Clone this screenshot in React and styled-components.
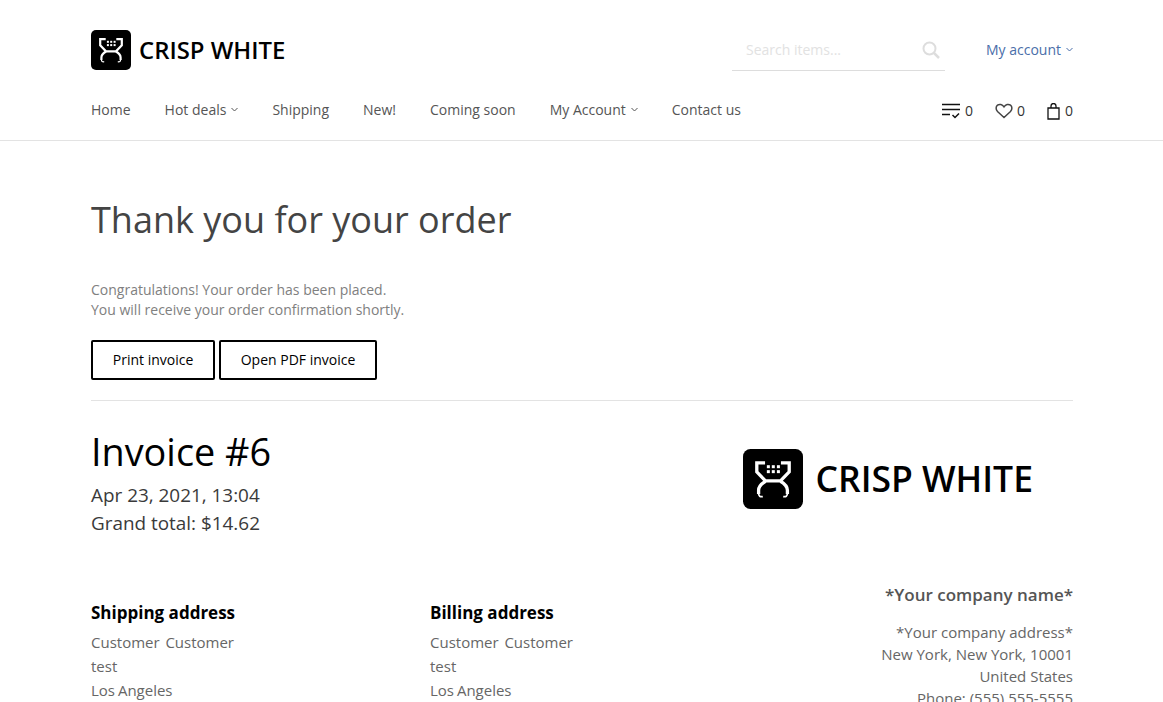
import React from "react";
import styled, { createGlobalStyle } from "styled-components";

const GlobalStyle = createGlobalStyle`
  html, body {
    margin: 0;
    padding: 0;
    background: #fff;
    overflow: hidden;
  }
  body {
    font-family: "Open Sans", "Liberation Sans", sans-serif;
    font-size: 14px;
    color: #444;
  }
  * { box-sizing: border-box; }
`;

const Page = styled.div`
  height: 100vh;
  overflow: hidden;
`;

const Header = styled.header`
  height: 141px;
  border-bottom: 1px solid #e3e3e3;
`;

const Wrap = styled.div`
  width: 982px;
  margin-left: 91px;
`;

const TopRow = styled.div`
  display: flex;
  align-items: center;
  justify-content: space-between;
  height: 71px;
  padding-top: 29px;
`;

const Brand = styled.div`
  display: flex;
  align-items: center;
  gap: ${(p) => (p.$big ? "12px" : "8px")};
  color: #000;
  font-size: ${(p) => (p.$big ? "35.5px" : "23.9px")};
  font-weight: 600;
  line-height: 1;
  white-space: nowrap;
`;

const BrandName = styled.span`
  padding-bottom: ${(p) => (p.$big ? "1px" : "0")};
`;

const TopRight = styled.div`
  display: flex;
  align-items: center;
`;

const Search = styled.div`
  width: 213px;
  height: 42px;
  margin-right: 41px;
  padding: 0 5px 0 14px;
  display: flex;
  align-items: center;
  justify-content: space-between;
  border-bottom: 1px solid #ddd;
  color: #e2e2e2;
  font-size: 14px;
`;

const Account = styled.a`
  display: flex;
  align-items: center;
  gap: 5px;
  padding-bottom: 2px;
  color: #4a6ea9;
  font-size: 14px;
`;

const NavRow = styled.div`
  display: flex;
  align-items: center;
  justify-content: space-between;
  height: 40px;
  margin-top: 18px;
`;

const Menu = styled.nav`
  display: flex;
  gap: 34px;
`;

const MenuItem = styled.a`
  display: flex;
  align-items: center;
  gap: 5px;
  color: #555;
  font-size: 14px;
  line-height: 19px;
`;

const Counters = styled.div`
  display: flex;
  gap: 22px;
  padding-top: 4px;
`;

const Counter = styled.div`
  display: flex;
  align-items: center;
  gap: ${(p) => p.$gap || "5px"};
  color: #333;
  font-size: 14px;
  line-height: 20px;
`;

const Title = styled.h1`
  margin: 52px 0 0;
  font-size: 36px;
  line-height: 54px;
  font-weight: 400;
  color: #444;
`;

const Lead = styled.p`
  margin: 33px 0 0;
  font-size: 14px;
  line-height: 20px;
  color: #808080;
`;

const Actions = styled.div`
  display: flex;
  gap: 4px;
  margin-top: 20px;
  padding-bottom: 20px;
  border-bottom: 1px solid #e3e3e3;
`;

const OutlineButton = styled.button`
  width: ${(p) => p.$w};
  height: 40px;
  padding: 0 0 2px;
  background: #fff;
  border: 2px solid #000;
  border-radius: 2px;
  color: #000;
  font-family: inherit;
  font-size: 14px;
`;

const InvoiceHead = styled.div`
  display: flex;
  justify-content: space-between;
`;

const InvoiceTitle = styled.h2`
  margin: 24px 0 0;
  font-size: 37.8px;
  line-height: 54px;
  font-weight: 400;
  color: #000;
`;

const InvoiceMeta = styled.div`
  margin-top: 2px;
  font-size: 18.9px;
  line-height: 28px;
  font-weight: 400;
  color: #3a3a3a;
`;

const LogoSlot = styled.div`
  margin: 48px 40px 0 0;
`;

const Columns = styled.div`
  display: flex;
  margin-top: 46px;
`;

const AddressColumn = styled.div`
  width: 339px;
  padding-top: 18px;
`;

const AddressTitle = styled.h3`
  margin: 0 0 5px;
  font-size: 17px;
  line-height: 24px;
  font-weight: 700;
  color: #000;
`;

const AddressLine = styled.div`
  font-size: 15px;
  line-height: 24px;
  word-spacing: -1px;
  color: #666;
  white-space: pre-wrap;
`;

const Company = styled.div`
  flex: 1;
  text-align: right;
  color: #666;
  font-size: 15px;
  line-height: 22px;
`;

const CompanyName = styled.div`
  margin-bottom: 14px;
  color: #555;
  font-size: 17px;
  line-height: 24px;
  font-weight: 600;
`;

function CartMark({ size }) {
  return (
    <svg width={size} height={size} viewBox="0 0 40 40">
      <rect width="40" height="40" rx="5" fill="#000" />
      <g fill="none" stroke="#fff" strokeWidth="2.200">
        <path d="M14.700 9.200H9.200V15.300L15 21.300H25L30.800 15.300V9.200H25.300" />
        <path d="M15 21.500C12.500 23 10.400 24.500 10.400 27.500V30" />
        <path d="M25 21.500C27.500 23 29.600 24.500 29.600 27.500V30" />
        <path d="M10.400 29.500c0 2 1 2.500 2.800 2.200M29.600 29.500c0 2-1 2.500-2.800 2.200" strokeWidth="1.200" />
      </g>
      <g fill="#fff">
        <rect x="15.900" y="10.800" width="2" height="2" />
        <rect x="19.200" y="10.800" width="2" height="2" />
        <rect x="22.600" y="10.800" width="2" height="2" />
        <rect x="15.900" y="14.100" width="2" height="2" />
        <rect x="19.200" y="14.100" width="2" height="2" />
        <rect x="22.600" y="14.100" width="2" height="2" />
      </g>
    </svg>
  );
}

function Chevron() {
  return (
    <svg width="7" height="5" viewBox="0 0 7 5" fill="none" stroke="currentColor" strokeWidth="1">
      <path d="M.5 1l3 3 3-3" />
    </svg>
  );
}

const menu = [
  { label: "Home" },
  { label: "Hot deals", arrow: true },
  { label: "Shipping" },
  { label: "New!" },
  { label: "Coming soon" },
  { label: "My Account", arrow: true },
  { label: "Contact us" },
];

const address = ["Customer  Customer", "test", "Los Angeles"];

export default function App() {
  return (
    <Page>
      <GlobalStyle />
      <Header>
        <Wrap>
          <TopRow>
            <Brand>
              <CartMark size={40} />
              <BrandName>CRISP WHITE</BrandName>
            </Brand>
            <TopRight>
              <Search>
                Search items...
                <svg width="18" height="18" viewBox="0 0 18 18" fill="none" stroke="#ddd" strokeWidth="2">
                  <circle cx="7.500" cy="7.500" r="6" />
                  <path d="M12 12l5 5" strokeWidth="2.500" />
                </svg>
              </Search>
              <Account>
                My account <Chevron />
              </Account>
            </TopRight>
          </TopRow>
          <NavRow>
            <Menu>
              {menu.map((item) => (
                <MenuItem key={item.label}>
                  {item.label}
                  {item.arrow && <Chevron />}
                </MenuItem>
              ))}
            </Menu>
            <Counters>
              <Counter>
                <svg width="18" height="16" viewBox="0 0 18 16" fill="none" stroke="#111" strokeWidth="1.500">
                  <path d="M0 1.500h18M0 6.500h18M0 11.500h8M10.500 12l2.500 2.500L17 10.500" />
                </svg>
                0
              </Counter>
              <Counter $gap="4px">
                <svg width="18" height="16" viewBox="0 0 18 16" fill="none" stroke="#444" strokeWidth="1.500">
                  <path d="M9 14.500L2.500 8.500C.5 6.500.8 3.500 2.500 2.200c1.900-1.400 4.800-.9 6.500 1.600 1.700-2.500 4.600-3 6.500-1.600 1.700 1.300 2 4.300 0 6.300z" />
                </svg>
                0
              </Counter>
              <Counter>
                <svg width="13" height="17" viewBox="0 0 13 17" fill="none" stroke="#111" strokeWidth="1.300">
                  <path d="M1 5h11v11H1z" />
                  <path d="M4 5V3a2.500 2.500 0 015 0v2" />
                </svg>
                0
              </Counter>
            </Counters>
          </NavRow>
        </Wrap>
      </Header>
      <Wrap>
        <Title>Thank you for your order</Title>
        <Lead>
          Congratulations! Your order has been placed.
          <br />
          You will receive your order confirmation shortly.
        </Lead>
        <Actions>
          <OutlineButton $w="124px">Print invoice</OutlineButton>
          <OutlineButton $w="158px">Open PDF invoice</OutlineButton>
        </Actions>
        <InvoiceHead>
          <div>
            <InvoiceTitle>Invoice #6</InvoiceTitle>
            <InvoiceMeta>
              Apr 23, 2021, 13:04
              <br />
              Grand total: $14.62
            </InvoiceMeta>
          </div>
          <LogoSlot>
            <Brand $big>
              <CartMark size={60} />
              <BrandName $big>CRISP WHITE</BrandName>
            </Brand>
          </LogoSlot>
        </InvoiceHead>
        <Columns>
          <AddressColumn>
            <AddressTitle>Shipping address</AddressTitle>
            {address.map((line) => (
              <AddressLine key={line}>{line}</AddressLine>
            ))}
          </AddressColumn>
          <AddressColumn>
            <AddressTitle>Billing address</AddressTitle>
            {address.map((line) => (
              <AddressLine key={line}>{line}</AddressLine>
            ))}
          </AddressColumn>
          <Company>
            <CompanyName>*Your company name*</CompanyName>
            <div>*Your company address*</div>
            <div>New York, New York, 10001</div>
            <div>United States</div>
            <div>Phone: (555) 555-5555</div>
          </Company>
        </Columns>
      </Wrap>
    </Page>
  );
}
